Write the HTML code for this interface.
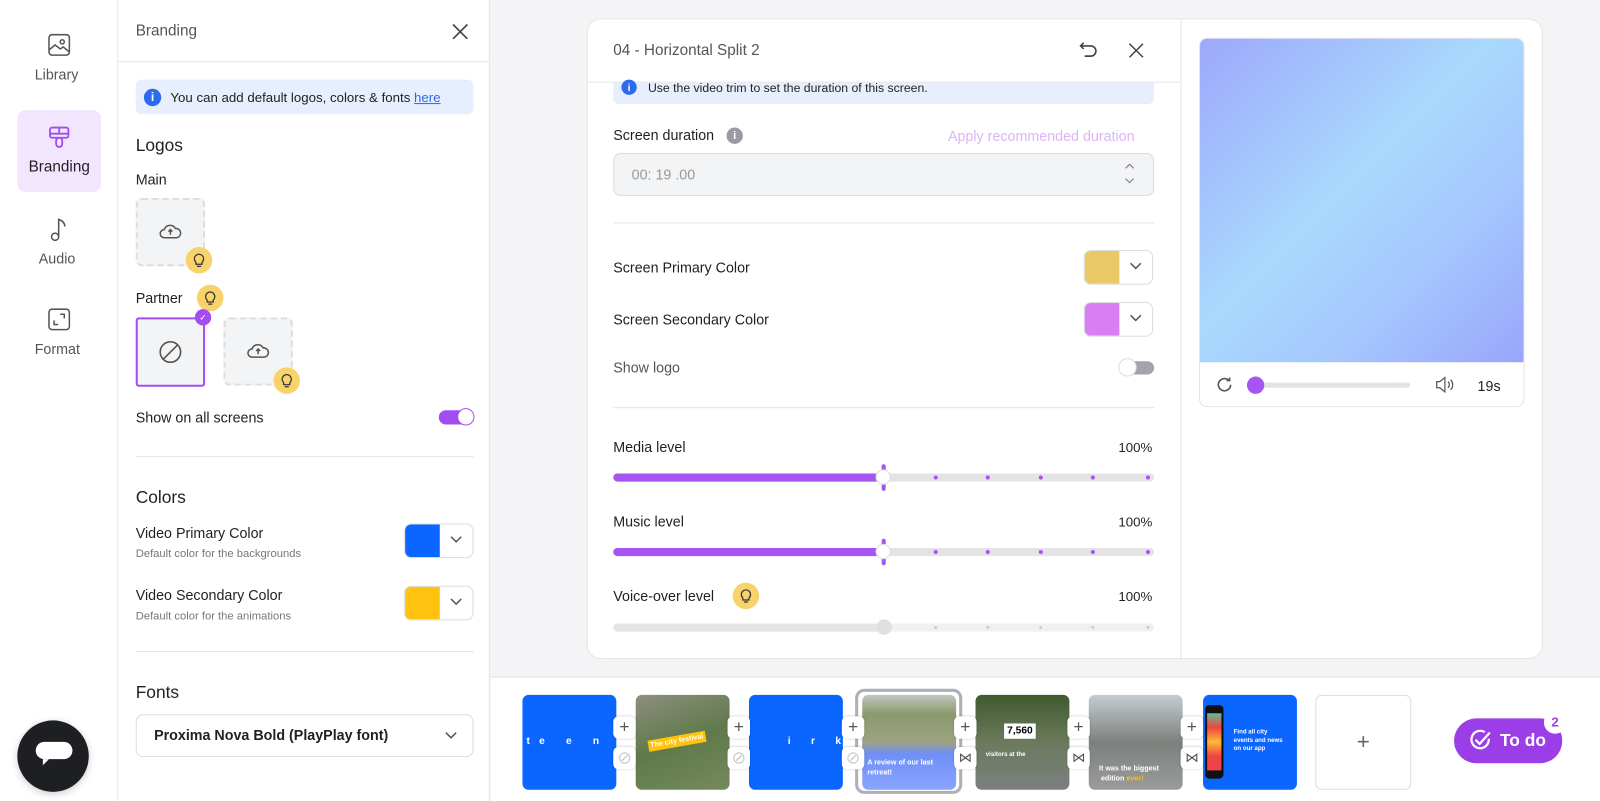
<!DOCTYPE html>
<html><head><meta charset="utf-8"><style>
*{box-sizing:border-box;margin:0;padding:0}
html,body{width:1600px;height:801px;overflow:hidden}
body{background:#f4f4f6;font-family:"Liberation Sans",sans-serif;color:#1f2024;position:relative}
#w{position:absolute;left:0;top:0;width:1568px;height:785px;transform:scale(1.020408);transform-origin:0 0}
.a{position:absolute}
.t{position:absolute;white-space:nowrap}
.bulb{position:absolute;width:26px;height:26px;border-radius:50%;background:#f8d26a;display:flex;align-items:center;justify-content:center}
.sw{position:absolute;width:68px;height:34px;border:1px solid #dcdde1;border-radius:7px;background:#fff;overflow:hidden}
.sw i{position:absolute;left:0;top:0;bottom:0;width:34px}
.sw svg{position:absolute;right:10px;top:11px}
.th{position:absolute;top:681px;width:92px;height:93px;border-radius:6px;overflow:hidden}
.pb{position:absolute;width:22px;height:22px;background:#fff;border-radius:5px;box-shadow:0 0 2px rgba(0,0,0,.2);display:flex;align-items:center;justify-content:center;color:#555;font-size:17px}
</style></head><body><div id="w">
<!-- left nav -->
<div class="a" style="left:0;top:0;width:116px;height:801px;background:#fff;border-right:1px solid #e4e4e7"></div>
<svg class="a" style="left:46px;top:32px" width="24" height="24" viewBox="0 0 24 24" fill="none" stroke="#555" stroke-width="1.5"><rect x="2" y="2" width="20" height="20" rx="3"/><circle cx="15" cy="9" r="2"/><path d="M2 17l6-5 5 4 3-2 6 5"/></svg>
<div class="t" style="left:34px;top:65px;font-size:14px;color:#555">Library</div>
<div class="a" style="left:17px;top:108px;width:82px;height:80px;background:#f1e6fd;border-radius:8px"></div>
<svg class="a" style="left:47px;top:123px" width="22" height="24" viewBox="0 0 22 24" fill="none" stroke="#a04ef0" stroke-width="1.8"><rect x="2" y="2" width="18" height="10" rx="2"/><path d="M2 8h18M11 2v5"/><rect x="8" y="12" width="6" height="9" rx="3"/></svg>
<div class="t" style="left:28px;top:155px;font-size:15px;color:#1f2024">Branding</div>
<svg class="a" style="left:48px;top:212px" width="20" height="26" viewBox="0 0 20 26" fill="none" stroke="#555" stroke-width="1.5"><circle cx="6" cy="20" r="3.5"/><path d="M9.5 20V3c3 1 6 3 6 7"/></svg>
<div class="t" style="left:38px;top:245px;font-size:14px;color:#555">Audio</div>
<svg class="a" style="left:47px;top:302px" width="22" height="22" viewBox="0 0 22 22" fill="none" stroke="#555" stroke-width="1.5"><rect x="1" y="1" width="20" height="20" rx="3"/><path d="M12 6h4v4M6 12v4h4"/></svg>
<div class="t" style="left:34px;top:334px;font-size:14px;color:#555">Format</div>
<div class="a" style="left:17px;top:706px;width:70px;height:70px;border-radius:50%;background:#1e1f22;box-shadow:0 2px 8px rgba(0,0,0,.2)"></div>
<div class="a" style="left:35px;top:727px;width:36px;height:17px;border-radius:9px;background:#fff"></div>
<div class="a" style="left:42px;top:744px;width:0;height:0;border-left:6px solid #fff;border-bottom:6px solid transparent"></div>

<!-- branding panel -->
<div class="a" style="left:116px;top:0;width:364px;height:801px;background:#fff;border-right:1px solid #e4e4e7"></div>
<div class="a" style="left:116px;top:60px;width:364px;height:1px;background:#e4e4e7"></div>
<div class="t" style="left:133px;top:22px;font-size:15px;color:#555">Branding</div>
<svg class="a" style="left:442px;top:22px" width="18" height="18" viewBox="0 0 18 18" stroke="#444" stroke-width="1.6"><path d="M2 2l14 14M16 2L2 16"/></svg>
<div class="a" style="left:133px;top:78px;width:331px;height:34px;background:#e7eefd;border-radius:6px"></div>
<div class="a" style="left:141px;top:87px;width:17px;height:17px;border-radius:50%;background:#2c6bf0;color:#fff;font-size:12px;font-weight:bold;text-align:center;line-height:17px">i</div>
<div class="t" style="left:167px;top:88px;font-size:13px;color:#222">You can add default logos, colors &amp; fonts <span style="color:#2c6bf0;text-decoration:underline">here</span></div>
<div class="t" style="left:133px;top:133px;font-size:17px">Logos</div>
<div class="t" style="left:133px;top:168px;font-size:14px">Main</div>
<div class="a" style="left:133px;top:194px;width:68px;height:67px;border:2px dashed #ddd;border-radius:6px;background:#f3f4f6"></div>
<svg class="a" style="left:156px;top:218px" width="22" height="16" viewBox="0 0 22 16" fill="none" stroke="#555" stroke-width="1.5"><path d="M6 15H5a4 4 0 010-8 6 6 0 0111-1 4.5 4.5 0 011 9h-1H6z"/><path d="M11 12V7M9 9l2-2 2 2"/></svg>
<div class="bulb" style="left:182px;top:242px"><svg width="12" height="14" viewBox="0 0 12 14" fill="none" stroke="#333" stroke-width="1.2"><path d="M3 9a4.5 4.5 0 116 0v2H3z M4 13h4"/></svg></div>
<div class="t" style="left:133px;top:284px;font-size:14px">Partner</div>
<div class="bulb" style="left:193px;top:279px"><svg width="12" height="14" viewBox="0 0 12 14" fill="none" stroke="#333" stroke-width="1.2"><path d="M3 9a4.5 4.5 0 116 0v2H3z M4 13h4"/></svg></div>
<div class="a" style="left:133px;top:311px;width:68px;height:68px;border:2px solid #a34df0;border-radius:3px;background:#f3f4f6"></div>
<svg class="a" style="left:155px;top:333px" width="24" height="24" viewBox="0 0 24 24" fill="none" stroke="#555" stroke-width="1.6"><circle cx="12" cy="12" r="10"/><path d="M5 19L19 5"/></svg>
<div class="a" style="left:191px;top:303px;width:16px;height:16px;border-radius:50%;background:#a34df0;color:#fff;font-size:9px;text-align:center;line-height:16px">✓</div>
<div class="a" style="left:219px;top:311px;width:68px;height:67px;border:2px dashed #ddd;border-radius:6px;background:#f3f4f6"></div>
<svg class="a" style="left:242px;top:335px" width="22" height="16" viewBox="0 0 22 16" fill="none" stroke="#555" stroke-width="1.5"><path d="M6 15H5a4 4 0 010-8 6 6 0 0111-1 4.5 4.5 0 011 9h-1H6z"/><path d="M11 12V7M9 9l2-2 2 2"/></svg>
<div class="bulb" style="left:268px;top:360px"><svg width="12" height="14" viewBox="0 0 12 14" fill="none" stroke="#333" stroke-width="1.2"><path d="M3 9a4.5 4.5 0 116 0v2H3z M4 13h4"/></svg></div>
<div class="t" style="left:133px;top:401px;font-size:14px">Show on all screens</div>
<div class="a" style="left:430px;top:402px;width:34px;height:14px;border-radius:7px;background:#a34df0"></div>
<div class="a" style="left:448px;top:400px;width:17px;height:17px;border-radius:50%;background:#fff;border:1px solid #a34df0"></div>
<div class="a" style="left:133px;top:447px;width:331px;height:1px;background:#e4e4e7"></div>
<div class="t" style="left:133px;top:478px;font-size:17px">Colors</div>
<div class="t" style="left:133px;top:514px;font-size:14px">Video Primary Color</div>
<div class="t" style="left:133px;top:537px;font-size:11px;color:#777">Default color for the backgrounds</div>
<div class="sw" style="left:396px;top:513px"><i style="background:#0a66ff"></i><svg width="12" height="8" viewBox="0 0 12 8" fill="none" stroke="#555" stroke-width="1.5"><path d="M1 1l5 5 5-5"/></svg></div>
<div class="t" style="left:133px;top:575px;font-size:14px">Video Secondary Color</div>
<div class="t" style="left:133px;top:598px;font-size:11px;color:#777">Default color for the animations</div>
<div class="sw" style="left:396px;top:574px"><i style="background:#ffc20e"></i><svg width="12" height="8" viewBox="0 0 12 8" fill="none" stroke="#555" stroke-width="1.5"><path d="M1 1l5 5 5-5"/></svg></div>
<div class="a" style="left:133px;top:638px;width:331px;height:1px;background:#e4e4e7"></div>
<div class="t" style="left:133px;top:669px;font-size:17px">Fonts</div>
<div class="a" style="left:133px;top:700px;width:331px;height:42px;border:1px solid #dcdde1;border-radius:7px"></div>
<div class="t" style="left:151px;top:712px;font-size:14px;font-weight:bold">Proxima Nova Bold (PlayPlay font)</div>
<svg class="a" style="left:436px;top:717px" width="12" height="8" viewBox="0 0 12 8" fill="none" stroke="#555" stroke-width="1.5"><path d="M1 1l5 5 5-5"/></svg>

<!-- main card -->
<div class="a" style="left:575px;top:18px;width:937px;height:628px;background:#fff;border:1px solid #e4e4e7;border-radius:14px"></div>
<div class="a" style="left:1157px;top:19px;width:1px;height:626px;background:#e4e4e7"></div>
<div class="a" style="left:576px;top:80px;width:581px;height:1px;background:#e4e4e7"></div>
<div class="t" style="left:601px;top:41px;font-size:15px;color:#555">04 - Horizontal Split 2</div>
<svg class="a" style="left:1057px;top:40px" width="20" height="18" viewBox="0 0 20 18" fill="none" stroke="#444" stroke-width="1.6"><path d="M5 2L2 5l3 3M2 5h10a5 5 0 010 10H6"/></svg>
<svg class="a" style="left:1105px;top:41px" width="17" height="17" viewBox="0 0 18 18" stroke="#444" stroke-width="1.6"><path d="M2 2l14 14M16 2L2 16"/></svg>
<div class="a" style="left:601px;top:81px;width:530px;height:21px;background:#e7eefd;border-radius:0 0 6px 6px"></div>
<div class="a" style="left:609px;top:78px;width:15px;height:15px;border-radius:50%;background:#2c6bf0;color:#fff;font-size:10px;font-weight:bold;text-align:center;line-height:17px">i</div>
<div class="t" style="left:635px;top:79px;font-size:12px;color:#222">Use the video trim to set the duration of this screen.</div>
<div class="t" style="left:601px;top:124px;font-size:14px">Screen duration</div>
<div class="a" style="left:712px;top:125px;width:16px;height:16px;border-radius:50%;background:#9a9ba0;color:#fff;font-size:11px;font-weight:bold;text-align:center;line-height:16px">i</div>
<div class="t" style="left:929px;top:125px;font-size:14px;color:#dcb4f8">Apply recommended duration</div>
<div class="a" style="left:601px;top:150px;width:530px;height:42px;background:#f3f4f6;border:1px solid #dcdde1;border-radius:7px"></div>
<div class="t" style="left:619px;top:163px;font-size:14px;color:#999">00: 19 .00</div>
<svg class="a" style="left:1101px;top:158px" width="12" height="24" viewBox="0 0 12 24" fill="none" stroke="#888" stroke-width="1.2"><path d="M2 7l4-4 4 4M2 17l4 4 4-4"/></svg>
<div class="a" style="left:601px;top:218px;width:530px;height:1px;background:#e4e4e7"></div>
<div class="t" style="left:601px;top:254px;font-size:14px">Screen Primary Color</div>
<div class="sw" style="left:1062px;top:245px"><i style="background:#e9c866"></i><svg width="12" height="8" viewBox="0 0 12 8" fill="none" stroke="#555" stroke-width="1.5"><path d="M1 1l5 5 5-5"/></svg></div>
<div class="t" style="left:601px;top:305px;font-size:14px">Screen Secondary Color</div>
<div class="sw" style="left:1062px;top:296px"><i style="background:#d97ff5"></i><svg width="12" height="8" viewBox="0 0 12 8" fill="none" stroke="#555" stroke-width="1.5"><path d="M1 1l5 5 5-5"/></svg></div>
<div class="t" style="left:601px;top:352px;font-size:14px;color:#555">Show logo</div>
<div class="a" style="left:1097px;top:354px;width:34px;height:13px;border-radius:7px;background:#a3a4aa"></div>
<div class="a" style="left:1096px;top:351px;width:18px;height:18px;border-radius:50%;background:#fff;border:1px solid #ddd"></div>
<div class="a" style="left:601px;top:399px;width:530px;height:1px;background:#e4e4e7"></div>

<div class="t" style="left:601px;top:430px;font-size:14px">Media level</div>
<div class="t" style="left:1096px;top:431px;font-size:13px">100%</div>
<div class="a" style="left:601px;top:464px;width:530px;height:8px;border-radius:4px;background:#e4e4e7"></div>
<div class="a" style="left:601px;top:464px;width:265px;height:8px;border-radius:4px;background:#a655f2"></div>
<div class="a" style="left:864px;top:455px;width:4px;height:26px;border-radius:2px;background:#a655f2"></div>
<div class="a" style="left:858px;top:460px;width:15px;height:15px;border-radius:50%;background:#fff;border:1px solid #ddd"></div>

<div class="t" style="left:601px;top:503px;font-size:14px">Music level</div>
<div class="t" style="left:1096px;top:504px;font-size:13px">100%</div>
<div class="a" style="left:601px;top:537px;width:530px;height:8px;border-radius:4px;background:#e4e4e7"></div>
<div class="a" style="left:601px;top:537px;width:265px;height:8px;border-radius:4px;background:#a655f2"></div>
<div class="a" style="left:864px;top:528px;width:4px;height:26px;border-radius:2px;background:#a655f2"></div>
<div class="a" style="left:858px;top:533px;width:15px;height:15px;border-radius:50%;background:#fff;border:1px solid #ddd"></div>

<div class="t" style="left:601px;top:576px;font-size:14px">Voice-over level</div>
<div class="bulb" style="left:718px;top:571px"><svg width="12" height="14" viewBox="0 0 12 14" fill="none" stroke="#333" stroke-width="1.2"><path d="M3 9a4.5 4.5 0 116 0v2H3z M4 13h4"/></svg></div>
<div class="t" style="left:1096px;top:577px;font-size:13px">100%</div>
<div class="a" style="left:601px;top:611px;width:530px;height:8px;border-radius:4px;background:#f0f0f2"></div>
<div class="a" style="left:601px;top:611px;width:265px;height:8px;border-radius:4px;background:#e4e4e7"></div>
<div class="a" style="left:859px;top:607px;width:15px;height:15px;border-radius:50%;background:#e0e0e3"></div>
<svg class="a" style="left:880px;top:464px" width="250" height="160"><g fill="#a655f2"><circle cx="37" cy="4" r="2"/><circle cx="88" cy="4" r="2"/><circle cx="140" cy="4" r="2"/><circle cx="191" cy="4" r="2"/><circle cx="245" cy="4" r="2"/><circle cx="37" cy="77" r="2"/><circle cx="88" cy="77" r="2"/><circle cx="140" cy="77" r="2"/><circle cx="191" cy="77" r="2"/><circle cx="245" cy="77" r="2"/></g><g fill="#ccc"><circle cx="37" cy="151" r="1.5"/><circle cx="88" cy="151" r="1.5"/><circle cx="140" cy="151" r="1.5"/><circle cx="191" cy="151" r="1.5"/><circle cx="245" cy="151" r="1.5"/></g></svg>

<!-- preview -->
<div class="a" style="left:1175px;top:37px;width:319px;height:362px;border:1px solid #e4e4e7;border-radius:8px;overflow:hidden;background:#fff"></div>
<div class="a" style="left:1176px;top:38px;width:317px;height:317px;border-radius:7px 7px 0 0;background:linear-gradient(135deg,#9da8fb 0%,#a9d9fd 45%,#a5c7fd 70%,#9aa5fc 100%)"></div>
<svg class="a" style="left:1191px;top:368px" width="18" height="18" viewBox="0 0 18 18" fill="none" stroke="#555" stroke-width="1.6"><path d="M15 9a6 6 0 11-2-4.5M14 2v3h-3"/></svg>
<div class="a" style="left:1230px;top:375px;width:152px;height:5px;border-radius:3px;background:#e4e4e7"></div>
<div class="a" style="left:1222px;top:369px;width:17px;height:17px;border-radius:50%;background:#a655f2"></div>
<svg class="a" style="left:1406px;top:368px" width="20" height="18" viewBox="0 0 20 18" fill="none" stroke="#555" stroke-width="1.2"><path d="M2 6h3l5-4v14l-5-4H2z M13 6a4 4 0 010 6M15.5 4a7 7 0 010 10"/></svg>
<div class="t" style="left:1448px;top:370px;font-size:14px">19s</div>

<!-- bottom strip -->
<div class="a" style="left:481px;top:663px;width:1119px;height:138px;background:#fff;border-top:1px solid #e4e4e7"></div>
<div class="th" style="left:512px;background:#0a66ff;color:#fff;font-size:10px;font-weight:bold;padding:40px 0 0 4px;letter-spacing:9px">te e n</div>
<div class="th" style="left:623px;background:linear-gradient(160deg,#8d8f7e,#5f7a4a 50%,#758a5c)"><div class="a" style="left:12px;top:40px;background:#ffc20e;color:#fff;font-size:7px;font-weight:bold;padding:2px;transform:rotate(-10deg)">The city festival</div></div>
<div class="th" style="left:734px;background:#0a66ff;color:#fff;font-size:10px;font-weight:bold;padding:40px 0 0 38px;letter-spacing:20px">irk</div>
<div class="a" style="left:838px;top:675px;width:105px;height:103px;border:3px solid #aeb0b6;border-radius:9px"></div>
<div class="th" style="left:845px;background:linear-gradient(#c3c6c3 0,#8a9a6c 20%,#9da383 50%,#6f8ff7 62%,#88a5ff 100%)"><div class="a" style="left:5px;top:62px;color:#fff;font-size:7px;font-weight:bold;line-height:10px">A review of our last<br>retreat!</div></div>
<div class="th" style="left:956px;background:linear-gradient(#3f5a2f,#6c7a5c 50%,#7b7f80)"><div class="a" style="left:28px;top:28px;background:#fff;color:#000;font-size:10px;font-weight:bold;padding:2px 3px">7,560</div><div class="a" style="left:10px;top:56px;color:#fff;font-size:6px;font-weight:bold">visitors at the</div></div>
<div class="th" style="left:1067px;background:linear-gradient(#c5ccd2,#7d817d 50%,#999b9b)"><div class="a" style="left:10px;top:68px;color:#fff;font-size:7px;font-weight:bold;line-height:10px">It was the biggest<br>&nbsp;edition <span style="color:#ffc20e">ever!</span></div></div>
<div class="th" style="left:1179px;background:#0a66ff"><div class="a" style="left:2px;top:10px;width:18px;height:72px;border-radius:4px;background:#111"><div class="a" style="left:2px;top:8px;width:14px;height:56px;background:linear-gradient(#6b9,#e44 25%,#fb3 50%,#e44 75%)"></div></div><div class="a" style="left:30px;top:33px;color:#fff;font-size:6px;font-weight:bold;line-height:8px">Find all city<br>events and news<br>on our app</div></div>
<div class="a" style="left:1289px;top:681px;width:94px;height:93px;border:1px solid #dcdde1;border-radius:6px;background:#fff;color:#666;font-size:22px;text-align:center;line-height:90px">+</div>
<div class="pb" style="left:601px;top:702px">+</div><div class="pb" style="left:601px;top:732px;color:#ccc">⊘</div>
<div class="pb" style="left:713px;top:702px">+</div><div class="pb" style="left:713px;top:732px;color:#ccc">⊘</div>
<div class="pb" style="left:825px;top:702px">+</div><div class="pb" style="left:825px;top:732px;color:#ccc">⊘</div>
<div class="pb" style="left:935px;top:702px">+</div><div class="pb" style="left:935px;top:732px;font-size:13px">⋈</div>
<div class="pb" style="left:1046px;top:702px">+</div><div class="pb" style="left:1046px;top:732px;font-size:13px">⋈</div>
<div class="pb" style="left:1157px;top:702px">+</div><div class="pb" style="left:1157px;top:732px;font-size:13px">⋈</div>

<div class="a" style="left:1425px;top:704px;width:106px;height:44px;border-radius:22px;background:#9b3ee8"></div>
<svg class="a" style="left:1440px;top:715px" width="22" height="22" viewBox="0 0 22 22" fill="none" stroke="#fff" stroke-width="2.2"><path d="M19 9a8.5 8.5 0 11-4-6.5"/><path d="M6 10l4 4 10-11"/></svg>
<div class="t" style="left:1470px;top:716px;font-size:17px;font-weight:bold;color:#fff">To do</div>
<div class="a" style="left:1513px;top:697px;width:22px;height:22px;border-radius:50%;background:#fff;color:#9b3ee8;font-size:13px;font-weight:bold;text-align:center;line-height:22px">2</div>
</div></body></html>
